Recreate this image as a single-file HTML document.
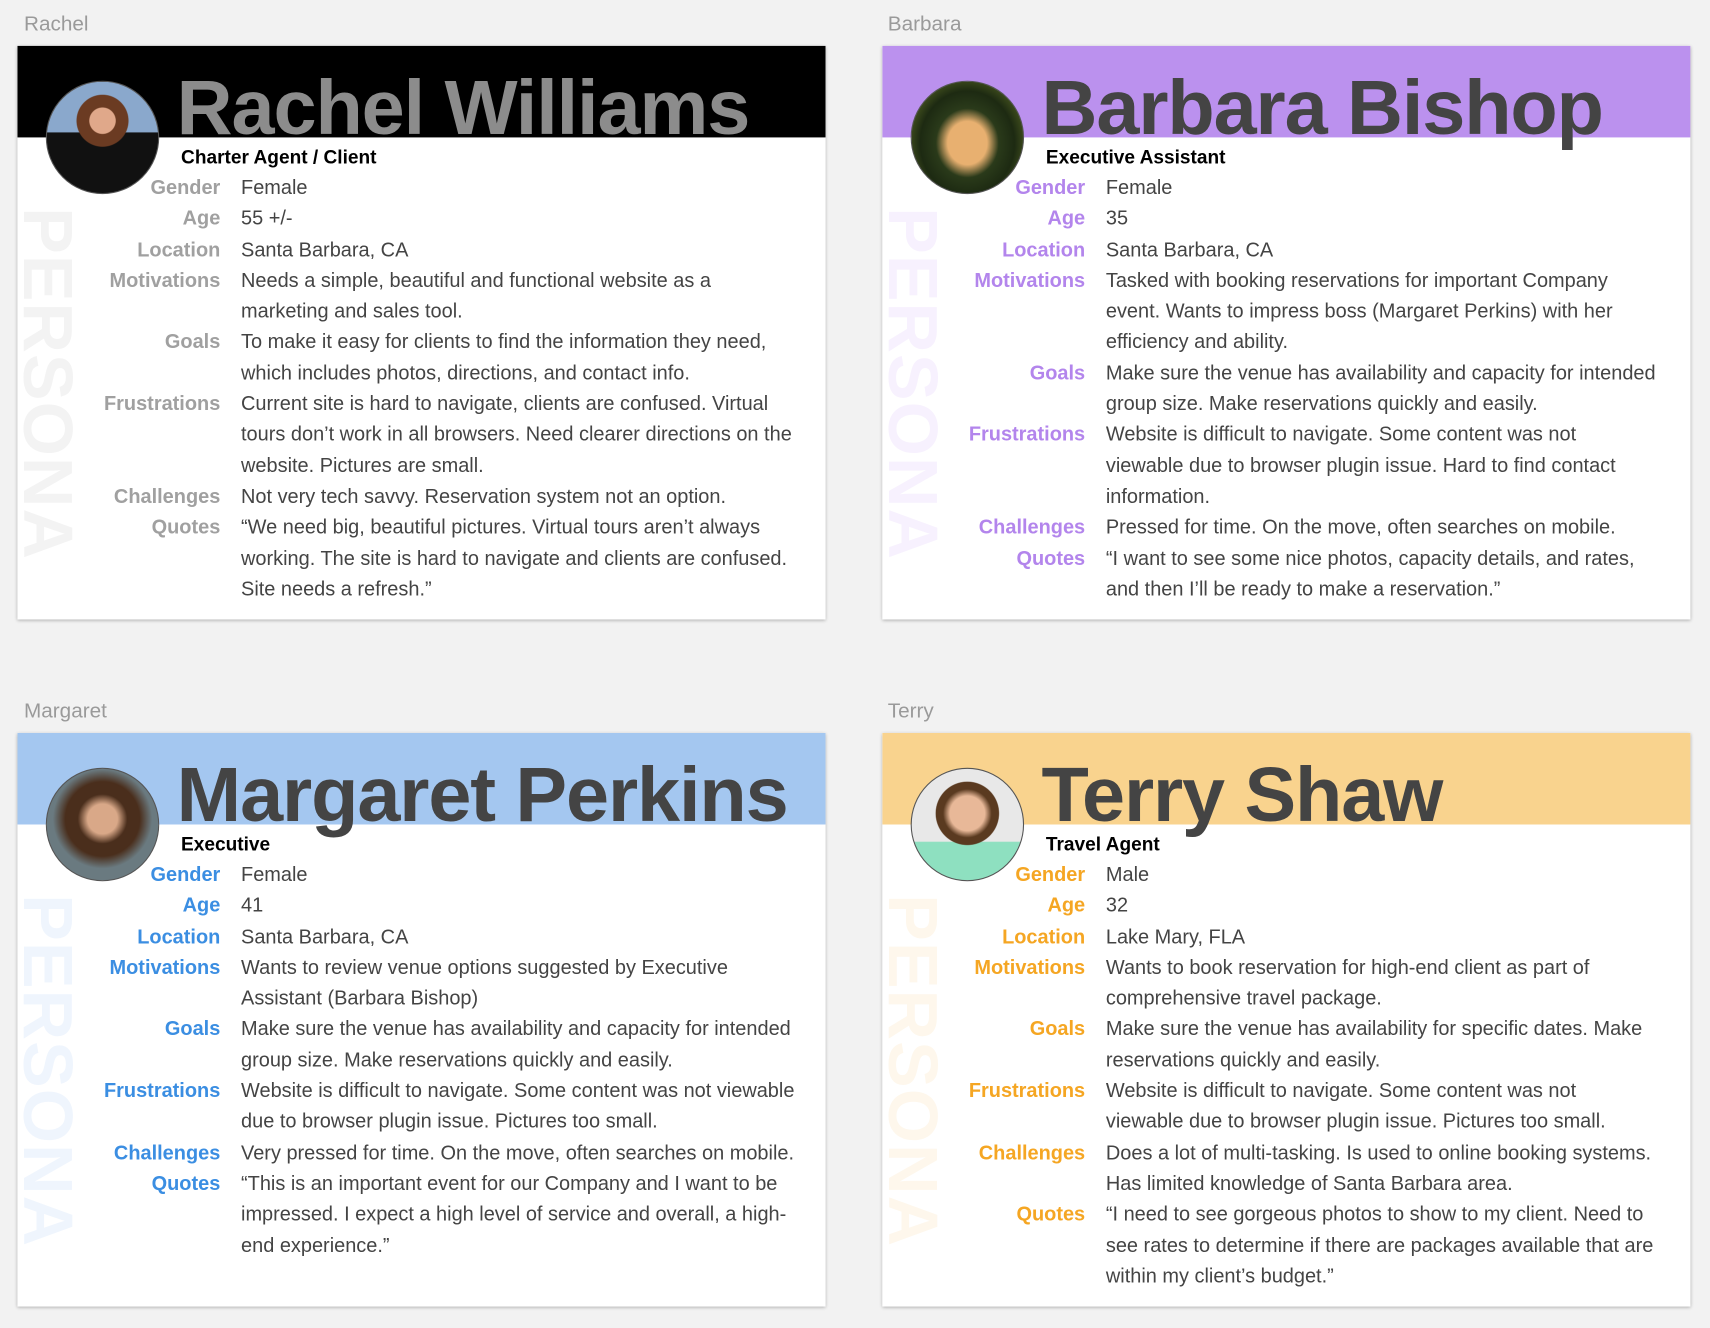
<!DOCTYPE html>
<html><head><meta charset="utf-8"><style>
html,body{margin:0;padding:0;background:#f2f2f2;width:1710px;height:1328px;overflow:hidden}
#w{position:absolute;left:0;top:0;width:1568px;height:1218px;transform:scale(1.0906);transform-origin:0 0;font-family:"Liberation Sans",sans-serif}
.lbl{position:absolute;font-size:19px;color:#9a9a9a}
.card{position:absolute;width:741px;height:526px;background:#fff;box-shadow:0 1px 3px rgba(0,0,0,.3);overflow:hidden}
.band{position:absolute;left:0;top:0;width:100%;height:84px}
.name{position:absolute;left:146px;top:18px;font-size:71px;font-weight:bold;letter-spacing:-1px;color:#444;white-space:nowrap;line-height:80px}
.av{position:absolute;left:26px;top:32px;width:102px;height:102px;border-radius:50%;border:1px solid #555;overflow:hidden}
.role{position:absolute;left:150px;top:92px;font-size:17.5px;font-weight:bold;color:#000}
.wm{position:absolute;left:2px;top:148px;width:60px;height:330px;}
.wm span{position:absolute;left:56px;top:0;transform:rotate(90deg);transform-origin:0 0;font-size:64px;font-weight:bold;white-space:nowrap;letter-spacing:1px;line-height:60px}
table{position:absolute;left:70px;top:116px;border-collapse:collapse;font-size:18.3px;line-height:28.3px}
td{padding:0;vertical-align:top}
td.k{text-align:right;width:116px;padding-right:19px;font-weight:bold}
td.v{color:#444;width:530px;white-space:nowrap}
</style></head><body><div id="w">

<div class="lbl" style="left:22px;top:12px">Rachel</div>
<div class="card" style="left:16px;top:42px">
 <div class="band" style="background:#000"></div>
 <div class="wm"><span style="color:#f3f3f3">PERSONA</span></div>
 <div class="name" style="color:#8c8c8c">Rachel Williams</div>
 <div class="av" style="background:radial-gradient(circle at 50% 35%,#e0a88a 0 14%,#6b3b22 15% 28%,transparent 29%),linear-gradient(#8aa8cc 0 45%,#111 46%)"></div>
 <div class="role">Charter Agent / Client</div>
 <table style="color:#a0a0a0">
 <tr><td class="k">Gender</td><td class="v">Female</td></tr>
 <tr><td class="k">Age</td><td class="v">55 +/-</td></tr>
 <tr><td class="k">Location</td><td class="v">Santa Barbara, CA</td></tr>
 <tr><td class="k">Motivations</td><td class="v">Needs a simple, beautiful and functional website as a<br>marketing and sales tool.</td></tr>
 <tr><td class="k">Goals</td><td class="v">To make it easy for clients to find the information they need,<br>which includes photos, directions, and contact info.</td></tr>
 <tr><td class="k">Frustrations</td><td class="v">Current site is hard to navigate, clients are confused. Virtual<br>tours don’t work in all browsers. Need clearer directions on the<br>website. Pictures are small.</td></tr>
 <tr><td class="k">Challenges</td><td class="v">Not very tech savvy. Reservation system not an option.</td></tr>
 <tr><td class="k">Quotes</td><td class="v">“We need big, beautiful pictures. Virtual tours aren’t always<br>working. The site is hard to navigate and clients are confused.<br>Site needs a refresh.”</td></tr>
 </table>
</div>

<div class="lbl" style="left:814px;top:12px">Barbara</div>
<div class="card" style="left:809px;top:42px">
 <div class="band" style="background:#bb91ee"></div>
 <div class="wm"><span style="color:#f7f1fe">PERSONA</span></div>
 <div class="name">Barbara Bishop</div>
 <div class="av" style="background:radial-gradient(ellipse at 50% 55%,#e8b070 0 25%,#2a3a1a 40%,#1d2a12 60%,#7a8a30)"></div>
 <div class="role">Executive Assistant</div>
 <table style="color:#b385ec">
 <tr><td class="k">Gender</td><td class="v">Female</td></tr>
 <tr><td class="k">Age</td><td class="v">35</td></tr>
 <tr><td class="k">Location</td><td class="v">Santa Barbara, CA</td></tr>
 <tr><td class="k">Motivations</td><td class="v">Tasked with booking reservations for important Company<br>event. Wants to impress boss (Margaret Perkins) with her<br>efficiency and ability.</td></tr>
 <tr><td class="k">Goals</td><td class="v">Make sure the venue has availability and capacity for intended<br>group size. Make reservations quickly and easily.</td></tr>
 <tr><td class="k">Frustrations</td><td class="v">Website is difficult to navigate. Some content was not<br>viewable due to browser plugin issue. Hard to find contact<br>information.</td></tr>
 <tr><td class="k">Challenges</td><td class="v">Pressed for time. On the move, often searches on mobile.</td></tr>
 <tr><td class="k">Quotes</td><td class="v">“I want to see some nice photos, capacity details, and rates,<br>and then I’ll be ready to make a reservation.”</td></tr>
 </table>
</div>

<div class="lbl" style="left:22px;top:642px">Margaret</div>
<div class="card" style="left:16px;top:672px">
 <div class="band" style="background:#a4c7f0"></div>
 <div class="wm"><span style="color:#eff5fd">PERSONA</span></div>
 <div class="name">Margaret Perkins</div>
 <div class="av" style="background:radial-gradient(circle at 50% 45%,#d9a888 0 18%,#4a2e1c 30% 45%,#6a7a80 60%)"></div>
 <div class="role">Executive</div>
 <table style="color:#3b8ee2">
 <tr><td class="k">Gender</td><td class="v">Female</td></tr>
 <tr><td class="k">Age</td><td class="v">41</td></tr>
 <tr><td class="k">Location</td><td class="v">Santa Barbara, CA</td></tr>
 <tr><td class="k">Motivations</td><td class="v">Wants to review venue options suggested by Executive<br>Assistant (Barbara Bishop)</td></tr>
 <tr><td class="k">Goals</td><td class="v">Make sure the venue has availability and capacity for intended<br>group size. Make reservations quickly and easily.</td></tr>
 <tr><td class="k">Frustrations</td><td class="v">Website is difficult to navigate. Some content was not viewable<br>due to browser plugin issue. Pictures too small.</td></tr>
 <tr><td class="k">Challenges</td><td class="v">Very pressed for time. On the move, often searches on mobile.</td></tr>
 <tr><td class="k">Quotes</td><td class="v">“This is an important event for our Company and I want to be<br>impressed. I expect a high level of service and overall, a high-<br>end experience.”</td></tr>
 </table>
</div>

<div class="lbl" style="left:814px;top:642px">Terry</div>
<div class="card" style="left:809px;top:672px">
 <div class="band" style="background:#f9d38e"></div>
 <div class="wm"><span style="color:#fef7ec">PERSONA</span></div>
 <div class="name">Terry Shaw</div>
 <div class="av" style="background:radial-gradient(circle at 50% 40%,#e8b898 0 20%,#5a3a20 28% 36%,transparent 37%),linear-gradient(#e8e8e8 0 65%,#8ee0c0 66%)"></div>
 <div class="role">Travel Agent</div>
 <table style="color:#f5a623">
 <tr><td class="k">Gender</td><td class="v">Male</td></tr>
 <tr><td class="k">Age</td><td class="v">32</td></tr>
 <tr><td class="k">Location</td><td class="v">Lake Mary, FLA</td></tr>
 <tr><td class="k">Motivations</td><td class="v">Wants to book reservation for high-end client as part of<br>comprehensive travel package.</td></tr>
 <tr><td class="k">Goals</td><td class="v">Make sure the venue has availability for specific dates. Make<br>reservations quickly and easily.</td></tr>
 <tr><td class="k">Frustrations</td><td class="v">Website is difficult to navigate. Some content was not<br>viewable due to browser plugin issue. Pictures too small.</td></tr>
 <tr><td class="k">Challenges</td><td class="v">Does a lot of multi-tasking. Is used to online booking systems.<br>Has limited knowledge of Santa Barbara area.</td></tr>
 <tr><td class="k">Quotes</td><td class="v">“I need to see gorgeous photos to show to my client. Need to<br>see rates to determine if there are packages available that are<br>within my client’s budget.”</td></tr>
 </table>
</div>

</div></body></html>
